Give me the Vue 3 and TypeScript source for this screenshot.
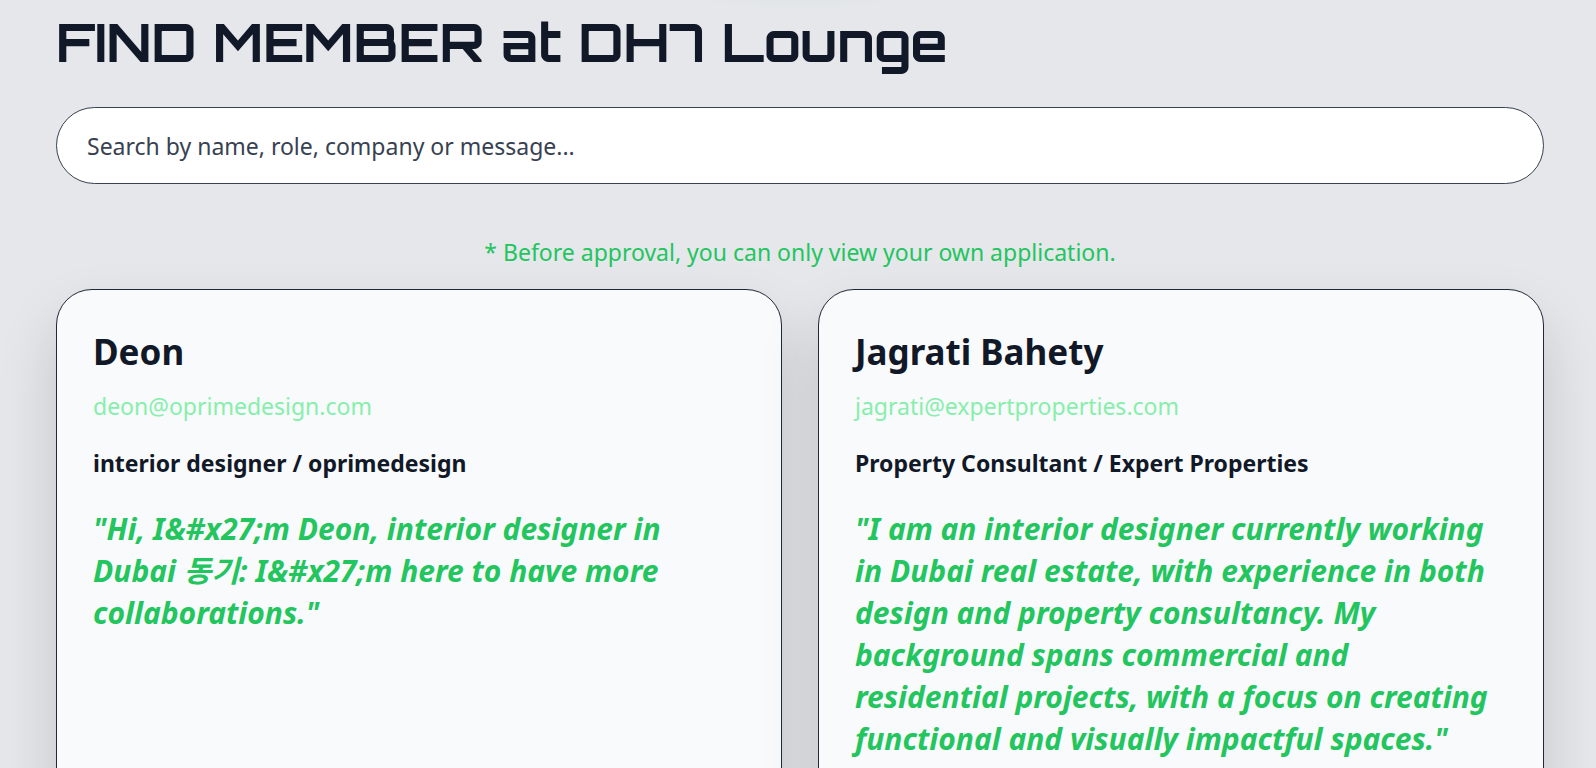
<script setup lang="ts">
import { computed, ref } from 'vue'

interface Member {
  name: string
  email: string
  role: string
  company: string
  message: string
}

const members: Member[] = [
  {
    name: 'Deon',
    email: 'deon@oprimedesign.com',
    role: 'interior designer',
    company: 'oprimedesign',
    message: 'Hi, I&#x27;m Deon, interior designer in Dubai 동기: I&#x27;m here to have more collaborations.',
  },
  {
    name: 'Jagrati Bahety',
    email: 'jagrati@expertproperties.com',
    role: 'Property Consultant',
    company: 'Expert Properties',
    message:
      'I am an interior designer currently working in Dubai real estate, with experience in both design and property consultancy. My background spans commercial and residential projects, with a focus on creating functional and visually impactful spaces.',
  },
]

const query = ref('')

const filtered = computed(() => {
  const q = query.value.trim().toLowerCase()
  return members.filter((m) => Object.values(m).some((v) => v.toLowerCase().includes(q)))
})
</script>

<template>
  <main class="page">
    <h1 class="title">FIND MEMBER at DH7 Lounge</h1>
    <input
      v-model="query"
      class="search"
      type="search"
      aria-label="Search members"
      placeholder="Search by name, role, company or message..."
    />
    <p class="notice">* Before approval, you can only view your own application.</p>
    <section class="cards">
      <article v-for="m in filtered" :key="m.email" class="card">
        <h2 class="name">{{ m.name }}</h2>
        <a class="email" :href="`mailto:${m.email}`">{{ m.email }}</a>
        <p class="role">{{ m.role }} / {{ m.company }}</p>
        <p class="message">"{{ m.message }}"</p>
      </article>
    </section>
  </main>
</template>

<style>
body {
  margin: 0;
  background: #e5e7eb;
}
</style>

<style scoped>
.page {
  box-sizing: border-box;
  min-height: 100vh;
  padding: 7px 52px 60px 56px;
  color: #111827;
  font-family: 'Malgun Gothic', 'Noto Sans', 'Noto Sans CJK KR', sans-serif;
  font-size: 23px;
  line-height: 36px;
  background: radial-gradient(110px 10px at 50% 0, #e2e6e9 40%, #e5e7eb);
}
.title {
  margin: 0 0 32px;
  font-family: Orbitron, 'DejaVu Sans', sans-serif;
  font-size: 54px;
  font-weight: 700;
  line-height: 68px;
}
.search {
  display: block;
  box-sizing: border-box;
  width: 100%;
  height: 77px;
  margin: 0;
  padding: 0 30px;
  border: 1px solid #374151;
  border-radius: 39px;
  background: #fff;
  color: #111827;
  font: inherit;
  appearance: none;
  outline: none;
}
.search::placeholder {
  color: #374151;
  opacity: 1;
}
.notice {
  margin: 50px 0 19px;
  color: #22c55e;
  text-align: center;
}
.cards {
  display: grid;
  grid-template-columns: repeat(2, minmax(0, 1fr));
  gap: 36px;
}
.card {
  padding: 36px 36px 72px;
  border: 1px solid #1f2937;
  border-radius: 36px;
  background: #f9fafb;
  box-shadow: 0 30px 60px rgba(0, 0, 0, 0.15);
}
.name {
  margin: 0 0 10px;
  font-size: 35px;
  font-weight: 700;
  line-height: 52px;
}
.email {
  display: block;
  color: #86efac;
  text-decoration: none;
}
.role {
  margin: 21px 0 27px;
  font-weight: 700;
}
.message {
  margin: 0;
  color: #22c55e;
  font-size: 30px;
  font-style: italic;
  font-weight: 700;
  line-height: 42px;
}
</style>
